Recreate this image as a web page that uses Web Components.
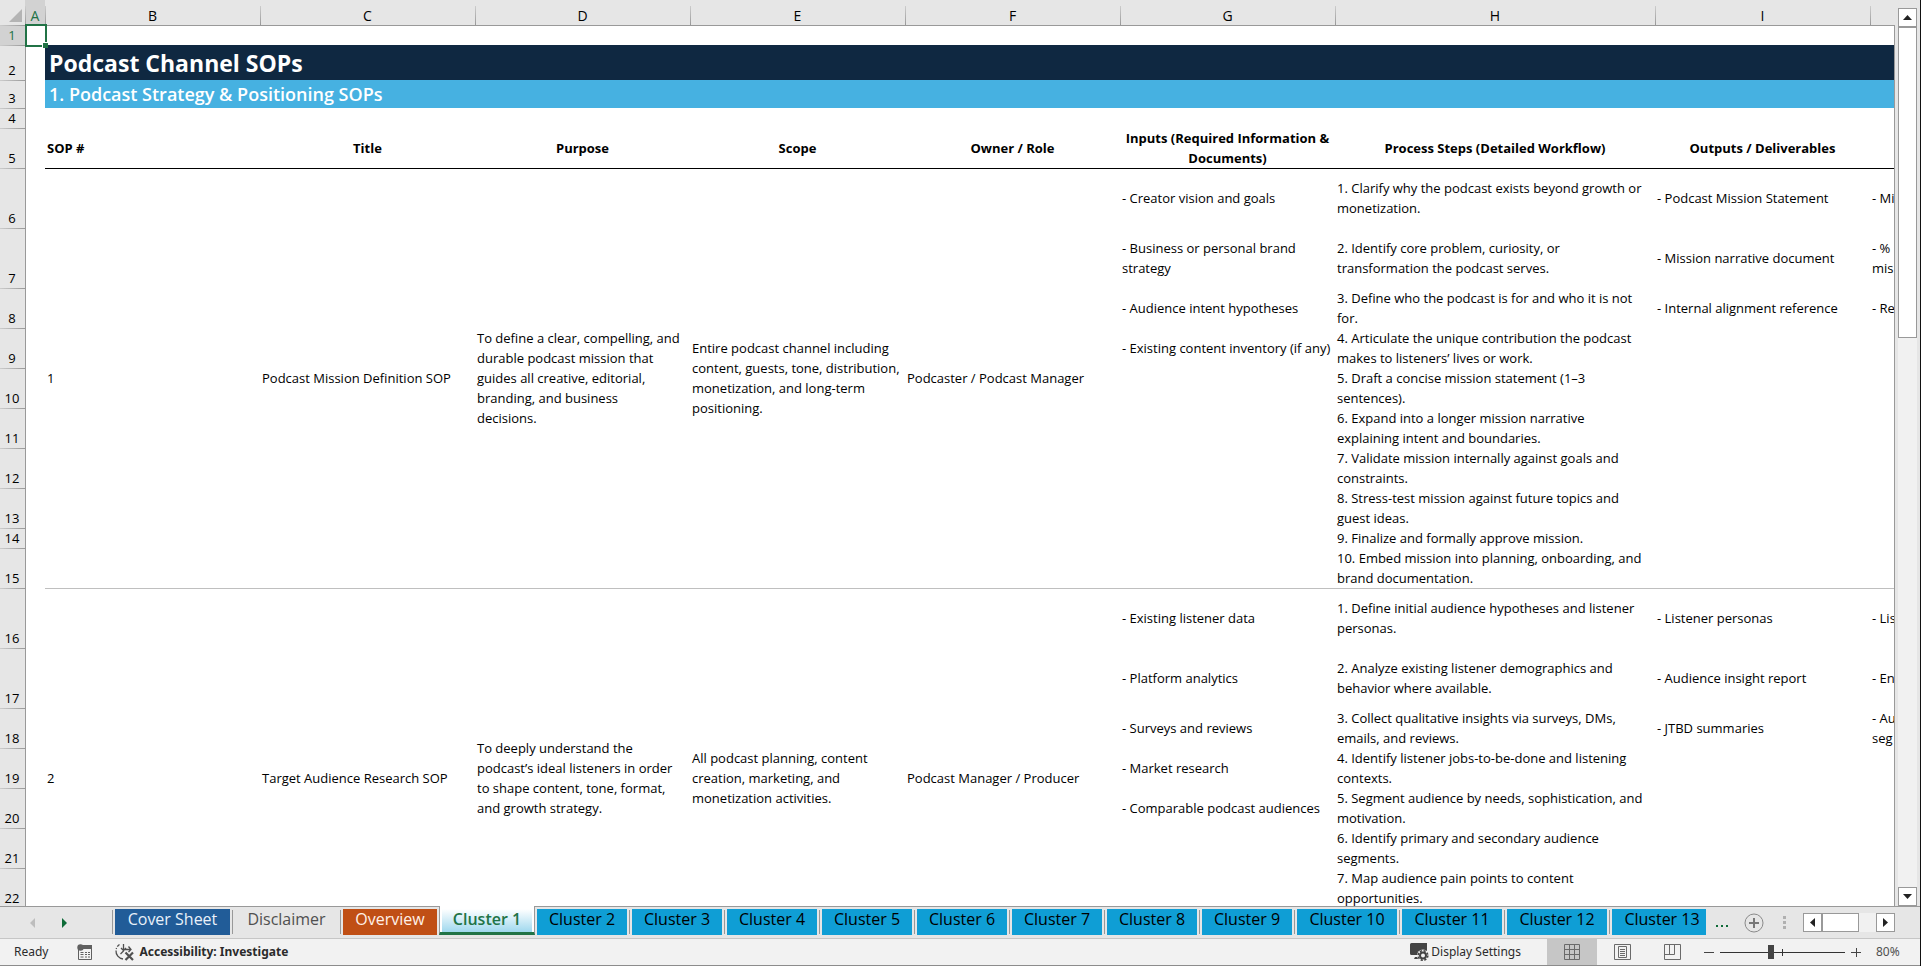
<!DOCTYPE html>
<html lang="en">
<head>
<meta charset="utf-8">
<title>Podcast Channel SOPs</title>
<style>
  html, body {
    height: 100%;
    margin: 0;
  }
  body {
    --chrome: #e6e6e6;
    --line: #999;
    --green: #217346;
    display: flex;
    flex-direction: column;
    box-sizing: border-box;
    border-right: 1px solid #111;
    background: var(--chrome);
    font-family: "Open Sans", "Noto Sans", sans-serif;
    font-size: 13px;
    color: #000;
    overflow: hidden;
  }
  main {
    flex: 1;
    min-height: 0;
    display: flex;
  }
  sheet-grid {
    flex: 1;
    min-width: 0;
  }
  main > scroll-bar {
    margin: 8px 3px 0;
  }
  /* the selected tab draws its own right edge */
  sheet-tab[selected] + sheet-tab {
    --sep: none;
  }
</style>
</head>
<body>
  <main>
    <sheet-grid></sheet-grid>
    <scroll-bar vertical thumb="9" rest="16"></scroll-bar>
  </main>
  <sheet-tabs>
    <sheet-tab style="--bg:#215c98;--fg:#e9f1fa;--w:115px">Cover Sheet</sheet-tab>
    <sheet-tab style="--bg:transparent;--fg:#505050;--w:103px">Disclaimer</sheet-tab>
    <sheet-tab style="--bg:#c04f15;--fg:#fff1e8;--w:94px">Overview</sheet-tab>
    <sheet-tab selected>Cluster 1</sheet-tab>
    <sheet-tab>Cluster 2</sheet-tab>
    <sheet-tab>Cluster 3</sheet-tab>
    <sheet-tab>Cluster 4</sheet-tab>
    <sheet-tab>Cluster 5</sheet-tab>
    <sheet-tab>Cluster 6</sheet-tab>
    <sheet-tab>Cluster 7</sheet-tab>
    <sheet-tab>Cluster 8</sheet-tab>
    <sheet-tab>Cluster 9</sheet-tab>
    <sheet-tab style="--w:100px">Cluster 10</sheet-tab>
    <sheet-tab style="--w:100px">Cluster 11</sheet-tab>
    <sheet-tab style="--w:100px">Cluster 12</sheet-tab>
    <sheet-tab style="--w:100px">Cluster 13</sheet-tab>
  </sheet-tabs>
  <status-bar></status-bar>

<script>
  // column letters and widths
  const COLS = [
    ['A', 20], ['B', 215], ['C', 215], ['D', 215], ['E', 215],
    ['F', 215], ['G', 215], ['H', 320], ['I', 215], ['J', 215],
  ];

  const HEADINGS = [
    'SOP #', 'Title', 'Purpose', 'Scope', 'Owner / Role',
    'Inputs (Required Information &\nDocuments)',
    'Process Steps (Detailed Workflow)', 'Outputs / Deliverables', '',
  ];

  // one entry per SOP: merged cells B-F, then the rows with G, H, I, J
  const SOPS = [
    {
      merged: [
        '1',
        'Podcast Mission Definition SOP',
        'To define a clear, compelling, and\ndurable podcast mission that\nguides all creative, editorial,\nbranding, and business\ndecisions.',
        'Entire podcast channel including\ncontent, guests, tone, distribution,\nmonetization, and long-term\npositioning.',
        'Podcaster / Podcast Manager',
      ],
      rows: [
        [60, '- Creator vision and goals', '1. Clarify why the podcast exists beyond growth or\nmonetization.', '- Podcast Mission Statement', '- Mi'],
        [60, '- Business or personal brand\nstrategy', '2. Identify core problem, curiosity, or\ntransformation the podcast serves.', '- Mission narrative document', '- %\nmis'],
        [40, '- Audience intent hypotheses', '3. Define who the podcast is for and who it is not\nfor.', '- Internal alignment reference', '- Re'],
        [40, '- Existing content inventory (if any)', '4. Articulate the unique contribution the podcast\nmakes to listeners’ lives or work.', '', ''],
        [40, '', '5. Draft a concise mission statement (1–3\nsentences).', '', ''],
        [40, '', '6. Expand into a longer mission narrative\nexplaining intent and boundaries.', '', ''],
        [40, '', '7. Validate mission internally against goals and\nconstraints.', '', ''],
        [40, '', '8. Stress-test mission against future topics and\nguest ideas.', '', ''],
        [20, '', '9. Finalize and formally approve mission.', '', ''],
        [40, '', '10. Embed mission into planning, onboarding, and\nbrand documentation.', '', ''],
      ],
    },
    {
      merged: [
        '2',
        'Target Audience Research SOP',
        'To deeply understand the\npodcast’s ideal listeners in order\nto shape content, tone, format,\nand growth strategy.',
        'All podcast planning, content\ncreation, marketing, and\nmonetization activities.',
        'Podcast Manager / Producer',
      ],
      rows: [
        [60, '- Existing listener data', '1. Define initial audience hypotheses and listener\npersonas.', '- Listener personas', '- Lis'],
        [60, '- Platform analytics', '2. Analyze existing listener demographics and\nbehavior where available.', '- Audience insight report', '- En'],
        [40, '- Surveys and reviews', '3. Collect qualitative insights via surveys, DMs,\nemails, and reviews.', '- JTBD summaries', '- Au\nseg'],
        [40, '- Market research', '4. Identify listener jobs-to-be-done and listening\ncontexts.', '', ''],
        [40, '- Comparable podcast audiences', '5. Segment audience by needs, sophistication, and\nmotivation.', '', ''],
        [40, '', '6. Identify primary and secondary audience\nsegments.', '', ''],
        [40, '', '7. Map audience pain points to content\nopportunities.', '', ''],
      ],
      // the block goes on below the visible part of the sheet
      more: 60,
    },
  ];

  const esc = (s) => s.replace(/&/g, '&amp;');

  class SheetGrid extends HTMLElement {
    constructor() {
      super();
      this.attachShadow({ mode: 'open' });
      this.shadowRoot.innerHTML = /*html*/ `
        <style>
          :host {
            display: block;
            position: relative;
            overflow: hidden;
            background: #fff;
          }
          table {
            width: 0;
            table-layout: fixed;
            border-collapse: separate;
            border-spacing: 0;
          }
          th, td {
            box-sizing: border-box;
            padding: 0 2px;
            line-height: 20px;
            text-align: left;
            vertical-align: middle;
            white-space: pre;
          }
          thead th {
            height: 25px;
            padding: 6px 0 0;
            background: linear-gradient(to bottom, #ccc, var(--line)) left bottom / 1px 19px no-repeat var(--chrome);
            line-height: 19px;
            font-size: 14px;
            font-weight: 400;
            text-align: center;
          }
          thead th:first-child {
            background: var(--chrome);
          }
          .corner svg {
            display: block;
            margin-left: 9px;
          }
          tbody th {
            padding: 0 1px 0 0;
            box-shadow: 1px 0 var(--line);
            background: linear-gradient(to right, #ccc, var(--line)) left top / 100% 1px no-repeat var(--chrome);
            font-weight: 400;
            text-align: center;
            vertical-align: bottom;
          }
          thead th.on, tbody th.on {
            background-color: #d2d2d2;
            color: var(--green);
          }
          /* rules are inset shadows so they take no height from the row */
          tr:first-child > td {
            box-shadow: inset 0 1px var(--line);
          }
          .title {
            padding-left: 4px;
            background: #0f2841;
            color: #fff;
            font-size: 23px;
            font-weight: 700;
          }
          .subtitle {
            padding-left: 4px;
            background: #46b1e1;
            color: #fff;
            font-size: 18px;
            font-weight: 600;
          }
          .head td {
            font-weight: 700;
            text-align: center;
          }
          .head td:nth-child(3) {
            text-align: left;
          }
          .rule-black {
            box-shadow: inset 0 1px #000;
          }
          .rule-grey {
            box-shadow: inset 0 1px #bfbfbf;
          }
          .active {
            position: relative;
          }
          .cursor {
            position: absolute;
            inset: -1px -2px -2px 0;
            border: 2px solid var(--green);
          }
          .cursor::after {
            content: '';
            position: absolute;
            right: -3px;
            bottom: -3px;
            width: 5px;
            height: 5px;
            border: 1px solid #fff;
            border-width: 1px 0 0 1px;
            background: var(--green);
          }
          .edge {
            position: absolute;
            inset: 25px 0 0 auto;
            width: 1px;
            background: var(--line);
          }
        </style>
        <table>
          <colgroup><col style="width:25px">${COLS.map(([, w]) => `<col style="width:${w}px">`).join('')}</colgroup>
          <thead>
            <tr>
              <th class="corner"><svg width="13" height="13"><path d="M13 0V13H0z" fill="#b4b4b4"/></svg></th>
              ${COLS.map(([name]) => `<th scope="col" class="${name === 'A' ? 'on' : ''}">${name === 'J' ? '' : name}</th>`).join('')}
            </tr>
          </thead>
          <tbody>${this._rows()}</tbody>
        </table>
        <div class="edge"></div>
      `;
    }

    _rows() {
      let n = 1;
      const row = (height, cells, cls = '') =>
        `<tr class="${cls}" style="height:${height}px"><th scope="row" class="${n === 1 ? 'on' : ''}">${n++}</th>${cells}</tr>`;
      let html = row(20, '<td class="active"><div class="cursor"></div></td><td colspan="9"></td>');
      html += row(35, '<td></td><td class="title" colspan="9">Podcast Channel SOPs</td>');
      html += row(28, '<td></td><td class="subtitle" colspan="9">1. Podcast Strategy &amp; Positioning SOPs</td>');
      html += row(20, '<td colspan="10"></td>');
      html += row(40, '<td></td>' + HEADINGS.map((h) => `<td>${esc(h)}</td>`).join(''), 'head');
      SOPS.forEach((sop, s) => {
        const span = sop.rows.length + (sop.more ? 1 : 0);
        const rule = s === 0 ? 'rule-black' : 'rule-grey';
        sop.rows.forEach(([height, ...cells], i) => {
          const cls = i === 0 ? rule : '';
          let tds = '';
          if (i === 0) {
            tds += `<td rowspan="${span}"></td>`;
            tds += sop.merged.map((t) => `<td class="${cls}" rowspan="${span}">${t}</td>`).join('');
          }
          tds += cells.map((t) => `<td class="${cls}">${t}</td>`).join('');
          html += row(height, tds);
        });
        if (sop.more) {
          html += `<tr style="height:${sop.more}px"><th></th><td colspan="4"></td></tr>`;
        }
      });
      return html;
    }
  }

  class ScrollBar extends HTMLElement {
    constructor() {
      super();
      this.attachShadow({ mode: 'open' });
    }

    connectedCallback() {
      const vertical = this.hasAttribute('vertical');
      const back = vertical ? 'M4.500 0L9 5H0z' : 'M5 0V9L0 4.500z';
      const next = vertical ? 'M0 0H9L4.500 5z' : 'M0 0V9L5 4.500z';
      const size = vertical ? 'width="9" height="5"' : 'width="5" height="9"';
      this.shadowRoot.innerHTML = /*html*/ `
        <style>
          :host {
            display: flex;
            flex-direction: ${vertical ? 'column' : 'row'};
            box-sizing: border-box;
            ${vertical ? 'width' : 'height'}: 19px;
            background: #f1f1f1;
          }
          button, .thumb {
            box-sizing: border-box;
            border: 1px solid var(--line);
            background: #fff;
          }
          button {
            display: flex;
            align-items: center;
            justify-content: center;
            flex: none;
            width: 19px;
            height: 19px;
            padding: 0;
          }
          .thumb {
            flex: ${this.getAttribute('thumb')};
          }
          .rest {
            flex: ${this.getAttribute('rest')};
          }
        </style>
        <button aria-label="Scroll back"><svg ${size}><path d="${back}" fill="#222"/></svg></button>
        <div class="thumb"></div>
        <div class="rest"></div>
        <button aria-label="Scroll forward"><svg ${size}><path d="${next}" fill="#222"/></svg></button>
      `;
    }
  }

  class SheetTab extends HTMLElement {
    constructor() {
      super();
      this.attachShadow({ mode: 'open' });
      this.shadowRoot.innerHTML = /*html*/ `
        <style>
          :host {
            display: flex;
            flex: none;
            margin-left: 2px;
          }
          :host::before {
            content: '';
            display: var(--sep, block);
            width: 1px;
            height: 24px;
            margin: 3px 2px 0 0;
            background: var(--line);
          }
          button {
            box-sizing: border-box;
            width: var(--w, 90px);
            height: 26px;
            margin: 2px 0 0;
            padding: 0 0 6px;
            border: 0;
            background: var(--bg, #0f9ed5);
            color: var(--fg, #000);
            font-family: inherit;
            font-size: 16px;
            line-height: 20px;
            white-space: nowrap;
          }
          :host([selected]) {
            box-sizing: border-box;
            height: 29px;
            margin-top: -1px;
            padding: 2px 2px 0;
            border: 1px solid var(--line);
            border-width: 0 1px 0 1px;
            border-bottom: 3px solid var(--green);
            background: #fff;
          }
          :host([selected])::before {
            display: none;
          }
          :host([selected]) button {
            height: 23px;
            margin-top: 1px;
            padding-bottom: 4px;
            background: linear-gradient(to bottom, #fff, #9fd8ee);
            color: var(--green);
            font-weight: 600;
          }
        </style>
        <button role="tab"><slot></slot></button>
      `;
    }
  }

  class SheetTabs extends HTMLElement {
    constructor() {
      super();
      this.attachShadow({ mode: 'open' });
      this.shadowRoot.innerHTML = /*html*/ `
        <style>
          :host {
            display: flex;
            box-sizing: border-box;
            height: 33px;
            border-top: 1px solid var(--line);
            border-bottom: 1px solid #c6c6c6;
            background: var(--chrome);
          }
          button {
            padding: 0;
            border: 0;
            background: none;
            font-family: inherit;
            line-height: 0;
          }
          .nav {
            display: flex;
            flex: none;
            align-items: center;
            gap: 26px;
            width: 80px;
            padding-left: 30px;
          }
          .strip {
            display: flex;
            flex: 1;
            min-width: 0;
            overflow-x: clip;
          }
          .tools {
            display: flex;
            flex: none;
            align-items: center;
            padding: 0 25px 0 10px;
          }
          .more {
            width: 13px;
            margin-right: 15px;
            padding-top: 3px;
          }
          .grip {
            margin: 0 17px 0 19px;
          }
          scroll-bar {
            width: 92px;
          }
        </style>
        <div class="nav">
          <button aria-label="Previous sheet"><svg width="6" height="10"><path d="M5 0V10L0 5z" fill="#bdbdbd"/></svg></button>
          <button aria-label="Next sheet"><svg width="6" height="10"><path d="M0 0V10L5 5z" fill="#0e6b38"/></svg></button>
        </div>
        <div class="strip" role="tablist"><slot></slot></div>
        <div class="tools">
          <button class="more" aria-label="More sheets"><svg width="13" height="2" fill="#0e6b38"><path d="M0 0h2v2H0zM5 0h2v2H5zM10 0h2v2h-2z"/></svg></button>
          <button aria-label="New sheet">
            <svg width="20" height="20" fill="none" stroke="#8a8a8a"><circle cx="10" cy="10" r="9"/><path d="M5 10H15M10 5V15" stroke="#777" stroke-width="2"/></svg>
          </button>
          <svg class="grip" width="3" height="13" fill="#b0b0b0"><path d="M0 0h3v3H0zM0 5h3v3H0zM0 10h3v3H0z"/></svg>
          <scroll-bar thumb="2" rest="1"></scroll-bar>
        </div>
      `;
    }
  }

  class StatusBar extends HTMLElement {
    constructor() {
      super();
      this.attachShadow({ mode: 'open' });
      this.shadowRoot.innerHTML = /*html*/ `
        <style>
          :host {
            display: flex;
            align-items: center;
            box-sizing: border-box;
            height: 27px;
            padding: 0 19px 0 14px;
            border-bottom: 1px solid #8c8c8c;
            background: #f2f2f2;
            color: #2b2b2b;
            font-family: "Noto Sans", sans-serif;
            font-size: 12px;
            line-height: 16px;
          }
          button {
            display: flex;
            align-items: center;
            justify-content: center;
            align-self: stretch;
            padding: 0;
            border: 0;
            background: none;
            color: inherit;
            font: inherit;
          }
          svg {
            display: block;
          }
          .macro {
            margin: 0 22px 0 29px;
          }
          .check {
            gap: 4px;
            font-weight: 700;
          }
          .display {
            gap: 2px;
            margin-left: auto;
            padding-right: 26px;
          }
          .view {
            width: 50px;
          }
          .view.on {
            background: #c6c6c6;
          }
          .step {
            width: 10px;
          }
          .minus {
            margin-left: 7px;
          }
          input {
            appearance: none;
            width: 125px;
            height: 14px;
            margin: 0 6px;
            background:
              linear-gradient(#333, #333) 62px 4px / 1px 7px no-repeat,
              linear-gradient(#333, #333) 0 7px / 100% 1px no-repeat;
          }
          input::-webkit-slider-thumb {
            appearance: none;
            width: 6px;
            height: 14px;
            background: #444;
          }
          output {
            width: 25px;
            margin-left: 15px;
            color: #505050;
          }
        </style>
        <span>Ready</span>
        <button class="macro" aria-label="Record macro">
          <svg width="16" height="16" fill="none" stroke="#606060">
            <path d="M1.500 6V15.500H14.500V2.500H6"/>
            <path d="M6 1h9v4H6z" fill="#606060" stroke="none"/>
            <path d="M3.500 8.500h3M8 8.500h2M11 8.500h2M3.500 10.500h3M8 10.500h2M11 10.500h2M3.500 13h3M8 13h2M11 13h2"/>
            <circle cx="3.500" cy="3.500" r="3.200" fill="#606060" stroke="none"/>
          </svg>
        </button>
        <button class="check">
          <svg width="20" height="18" fill="none" stroke="#505050" stroke-width="1.300">
            <path d="M4.500 1.500A8 8 0 0 0 1.200 6" stroke-dasharray="3 1.500"/>
            <path d="M1 7.500A8 8 0 0 0 8 16"/>
            <path d="M8.500 1V8L5.500 11M8.500 6.500H15M6 5l2.500 2.500L11 5M13.500 3.500l2.500 3-2.500 2.500"/>
            <path d="M10.500 9.500l7.500 7.500M18 9.500l-7.500 7.500" stroke-width="2.200"/>
          </svg>
          Accessibility: Investigate
        </button>
        <button class="display">
          <svg width="19" height="18">
            <path d="M1.500 0H17V12H1.500Q0 12 0 10.500V1.500Q0 0 1.500 0zM5 14h5v2H4z" fill="#444"/>
            <circle cx="13" cy="12.500" r="6" fill="#f2f2f2"/>
            <circle cx="13" cy="12.500" r="4.800" fill="none" stroke="#444" stroke-width="1.600" stroke-dasharray="2.200 1.570"/>
            <circle cx="13" cy="12.500" r="3" fill="none" stroke="#444" stroke-width="2"/>
          </svg>
          Display Settings
        </button>
        <button class="view on" aria-label="Normal view">
          <svg width="16" height="16" fill="none" stroke="#6a6a6a"><path d="M.5.5h15v15H.5zM5.500 0v16M10.500 0v16M0 5.500h16M0 10.500h16"/></svg>
        </button>
        <button class="view" aria-label="Page layout">
          <svg width="17" height="16" fill="none" stroke="#6a6a6a"><path d="M.5.5h16v15H.5zM4.500 2.500h8v11h-8zM6 5.500h5M6 7.500h5M6 9.500h5M6 11.500h5"/></svg>
        </button>
        <button class="view" aria-label="Page break preview">
          <svg width="17" height="16" fill="none" stroke="#6a6a6a"><path d="M.5.5h16v15H.5zM.5 10.500h10V.5M5.500.5v10"/></svg>
        </button>
        <button class="step minus" aria-label="Zoom out"><svg width="10" height="10"><path d="M0 5.500H10" stroke="#444"/></svg></button>
        <input type="range" min="0" max="200" value="80" aria-label="Zoom">
        <button class="step" aria-label="Zoom in"><svg width="10" height="10"><path d="M0 5.500H10M5.500 1V10" stroke="#444"/></svg></button>
        <output>80%</output>
      `;
    }
  }

  customElements.define('sheet-grid', SheetGrid);
  customElements.define('scroll-bar', ScrollBar);
  customElements.define('sheet-tab', SheetTab);
  customElements.define('sheet-tabs', SheetTabs);
  customElements.define('status-bar', StatusBar);
</script>
</body>
</html>
